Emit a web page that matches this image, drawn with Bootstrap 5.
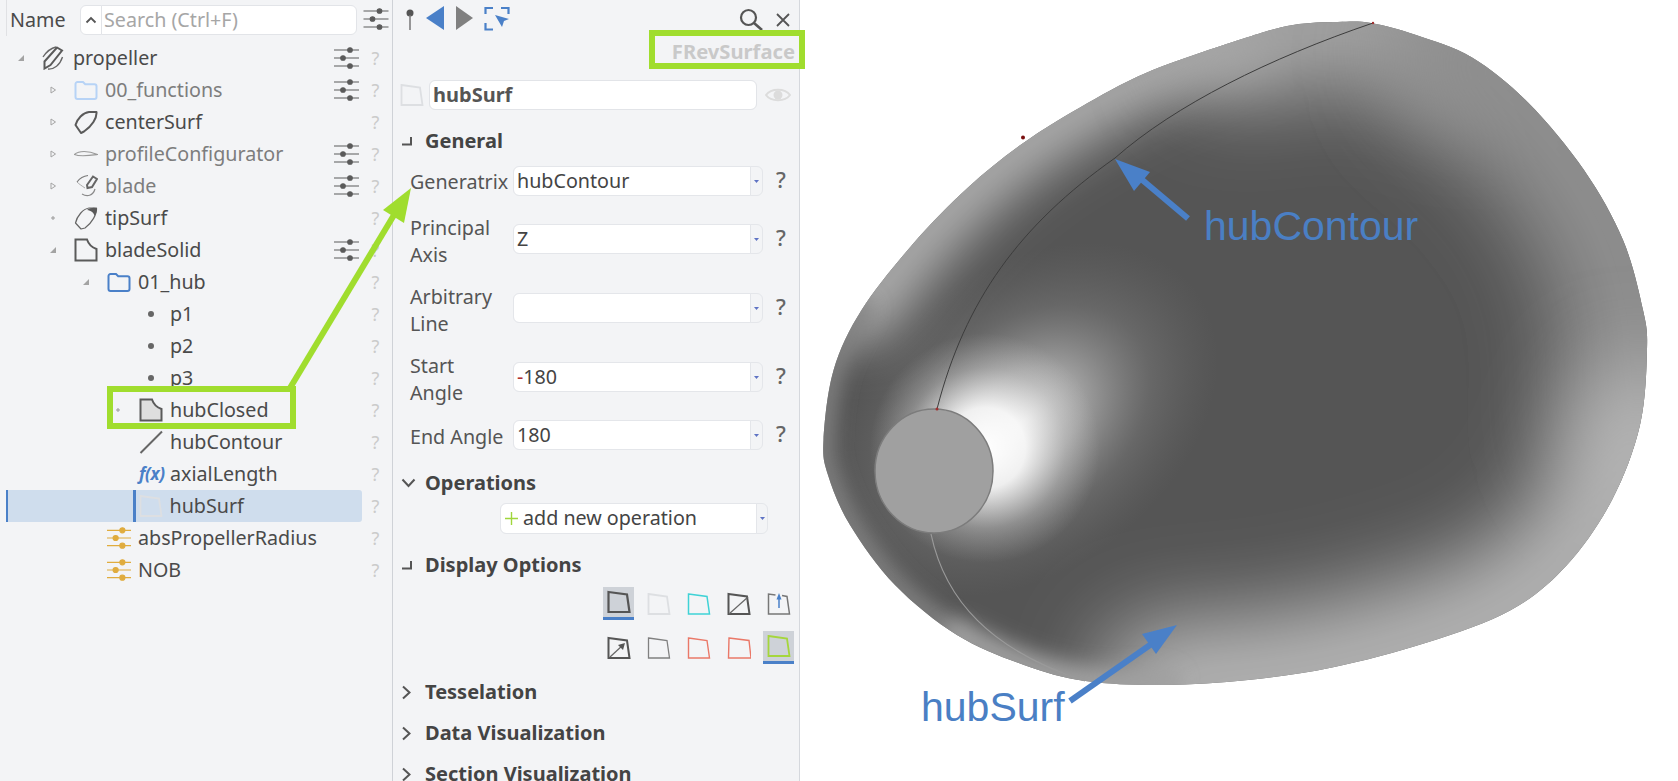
<!DOCTYPE html>
<html lang="en">
<head>
  <meta charset="UTF-8" />
  <title>hubSurf - FRevSurface</title>
  <link href="https://cdn.jsdelivr.net/npm/bootstrap@5.3.0/dist/css/bootstrap.min.css" rel="stylesheet" />
  <style>
    html, body { height: 781px; overflow: hidden; }
    body { font-family: "Noto Sans", "Open Sans", sans-serif; font-size: 19.7px; color: #4a4a4a; background: #fff; position: relative; }
    .tree-panel { width: 393px; background: #f3f4f6; border-right: 1.5px solid #cfd2d7; flex: none; }
    .props-panel { width: 407px; background: #f3f4f6; border-right: 1.5px solid #d5d8dd; flex: none; }
    .view-panel { flex: 1 1 auto; }
    .view-panel svg { display: block; }

    /* tree */
    .tree-head { height: 42px; padding-left: 6px; }
    .tree-head .name { border-left: 1px solid #e0e1e4; height: 36px; width: 74px; padding-left: 3px; line-height: 40px; }
    .search { width: 277px; height: 30px; margin-top: 5px; }
    .search .input-group-text { width: 22px; padding: 0; justify-content: center; background: #fff; border-color: #e2e4e8; }
    .search .form-control { padding: 0 2px; font-size: 19.7px; color: #a6a6a6; background: #fff; border-color: #e2e4e8; line-height: 28px; min-height: 0; }
    .head-tune { width: 26px; height: 22px; margin: 8px 0 0 6px; }
    .tree-row { height: 32px; margin-left: 6px; }
    .tree-main { width: 356px; height: 32px; flex: none; position: relative; padding-right: 3px; }
    .lvl-0 { padding-left: 8px; }
    .lvl-1 { padding-left: 40px; }
    .lvl-2 { padding-left: 73px; }
    .lvl-3 { padding-left: 105px; }
    .twist { width: 14px; margin-right: 14px; height: 32px; flex: none; display: flex; align-items: center; justify-content: center; }
    .ic { width: 24px; height: 24px; flex: none; margin-right: 7px; }
    .tree-row .lbl { flex: 1 1 auto; white-space: nowrap; }
    .muted-row { color: #7d7d7d; }
    .tune { width: 25px; height: 22px; flex: none; }
    .tree-help { width: 27px; text-align: center; color: #cbcbcb; font-size: 18px; }
    .tree-main.selected { background: #cfdded; border-radius: 0 3px 3px 0; border-left: 2.5px solid #4a80c8; padding-left: 102.5px; }
    .tree-main.selected::after { content: ""; position: absolute; left: 125px; top: 0; bottom: 0; width: 2.5px; background: #4a80c8; }
    .fx { color: #4a80c8; font-weight: 700; font-style: italic; font-size: 17px; width: 31px; flex: none; letter-spacing: -.3px; }

    /* properties */
    .tools { height: 36px; padding: 6px 5px 0 10px; }
    .ml-tri1 { margin-left: 8px; }
    .ml-tri2 { margin-left: 10px; }
    .ml-target { margin-left: 11px; }
    .type-name { height: 26px; line-height: 26px; margin-top: 2px; padding-right: 4px; color: #c9c9c9; font-weight: 700; font-size: 20.2px; }
    .name-row { margin-top: 16px; padding-left: 7px; height: 30px; }
    .name-box { width: 328px; height: 30px; margin-left: 5px; padding: 0 3px; font-size: 20px; font-weight: 700; color: #555; border-color: #e2e4e8; line-height: 28px; }
    .sect { height: 28px; padding-left: 8px; font-weight: 700; color: #444; font-size: 20px; }
    .sect .chev { width: 24px; flex: none; display: flex; }
    .form-line { margin-top: 15px; padding-left: 17px; }
    .form-line.first { margin-top: 8px; }
    .form-line.last { margin-top: 11px; }
    .form-line label { width: 103px; flex: none; line-height: 27px; color: #555; }
    .form-line.last label { margin-top: 2px; }
    .combo { width: 250px; height: 30px; flex: none; }
    .form-line.tall .combo { margin-bottom: 4px; }
    .combo .form-control { height: 30px; min-height: 0; padding: 0 3px; font-size: 19.7px; color: #444; line-height: 28px; border-color: #e4e6ea; white-space: nowrap; }
    .combo .input-group-text { width: 13px; padding: 0; justify-content: center; background: #f3f4f6; border-color: #e4e6ea; }
    .combo-help { width: 38px; text-align: center; color: #666; font-size: 22px; font-weight: 500; margin-bottom: 3px; }
    .form-line.tall .combo-help { margin-bottom: 7px; }
    .minus { color: #b03030; }
    .add-op { width: 268px; margin-left: 107px; height: 31px; margin-top: 6px; }
    .add-op .form-control { height: 31px; padding-left: 22px; position: relative; }
    .add-op svg.plus { position: absolute; left: 4px; top: 8px; }
    .add-op .input-group-text { width: 12px; }
    .disp-grid { display: grid; grid-template-columns: repeat(5, 31px); column-gap: 9px; row-gap: 11px; padding-left: 210px; margin-top: 8px; }
    .disp { height: 33px; display: flex; align-items: center; justify-content: center; }
    .disp.on { background: #ced2d8; border-bottom: 3px solid #4a80c8; }
    .disp svg { width: 24px; height: 24px; }
    .mt-13 { margin-top: 13px; }
    .mt-14 { margin-top: 14px; }
    .mt-16 { margin-top: 16px; }
    .mt-17 { margin-top: 17px; }

    .overlay { position: absolute; left: 0; top: 0; pointer-events: none; }
  </style>
</head>
<body class="d-flex">

  <svg width="0" height="0" class="position-absolute">
    <defs>
      <symbol id="tune" viewBox="0 0 25 22"><g stroke="#5a5a5a" stroke-width="1.100" fill="#5a5a5a"><path d="M0 3h25M0 11h25M0 19h25" fill="none"/><circle cx="16" cy="3" r="2.300"/><circle cx="9" cy="11" r="2.300"/><circle cx="16" cy="19" r="2.300"/></g></symbol>
      <symbol id="tune-y" viewBox="0 0 25 22"><g stroke="#e0ac3e" stroke-width="1.300" fill="#e0ac3e"><path d="M0 3h25M0 11h25M0 19h25" fill="none"/><circle cx="16" cy="3" r="2.600"/><circle cx="9" cy="11" r="2.600"/><circle cx="16" cy="19" r="2.600"/></g></symbol>
      <symbol id="tw-open" viewBox="0 0 8 8"><path d="M7 1v6H1z" fill="#a3a3a3"/></symbol>
      <symbol id="tw-closed" viewBox="0 0 8 8"><path d="M2 1l4.500 3L2 7z" fill="none" stroke="#a3a3a3"/></symbol>
      <symbol id="tw-plus" viewBox="0 0 8 8"><path d="M4 2v4M2 4h4" stroke="#999" stroke-width="1"/></symbol>
      <symbol id="folder" viewBox="0 0 24 24"><path d="M1.500 6a2 2 0 0 1 2-2h5.500l2.200 2.300h9.300a2 2 0 0 1 2 2V19a2 2 0 0 1-2 2h-17a2 2 0 0 1-2-2z" fill="none" stroke="currentColor" stroke-width="2"/></symbol>
      <symbol id="sheet" viewBox="0 0 24 24"><path d="M1.500 1.500H13C14.500 6 18 9.500 22.500 11V22.500H1.500z" fill="none" stroke="#5a5a5a" stroke-width="2"/></symbol>
      <symbol id="sheet-fill" viewBox="0 0 24 24"><path d="M1.500 1.500H13C14.500 6 18 9.500 22.500 11V22.500H1.500z" fill="#dedede" stroke="#5a5a5a" stroke-width="2"/></symbol>
      <symbol id="quad-pale" viewBox="0 0 24 24"><path d="M1.500 2L20 4.500L22.500 22H1.500z" fill="none" stroke="#dddfe2" stroke-width="1.800"/></symbol>
      <symbol id="center" viewBox="0 0 24 24"><path d="M1.500 15C3 9 9 2.500 15 2h7.500C23 8 18 16 10 21.500L7 23z" fill="none" stroke="#5a5a5a" stroke-width="2" stroke-linejoin="round"/></symbol>
      <symbol id="tip" viewBox="0 0 24 24"><path d="M1.500 17C3 10 9 3 15 2h7.500C23 8 18 17 11 22L7 23z" fill="none" stroke="#666" stroke-width="1.200" stroke-linejoin="round"/><path d="M13 4C16 1.500 21 1 23 2.500C23 5 22 8 20.500 10C20 6.500 17 4.500 13 4z" fill="#5a5a5a"/></symbol>
      <symbol id="airfoil" viewBox="0 0 24 24"><path d="M.5 12.500C5 8.500 14 8.500 23.500 12.500C14 13.800 6 15 .5 12.500z" fill="none" stroke="#999" stroke-width="1.200"/></symbol>
      <symbol id="blade" viewBox="0 0 24 24"><path d="M3 8C6 4 10 2 14 1.500" fill="none" stroke="#7a7a7a" stroke-width="1.200"/><path d="M3 8C5 10 8 12 11 14" fill="none" stroke="#999" stroke-width=".8"/><path d="M13 11L19 2.500L23 5L18 13L13.500 14z" fill="none" stroke="#666" stroke-width="2"/><path d="M8 20C13 23 19 22 21 15" fill="none" stroke="#8a8a8a" stroke-width="1.200"/></symbol>
      <symbol id="prop" viewBox="0 0 24 24"><path d="M1 11C5 5 9 2 14 1" fill="none" stroke="#666" stroke-width="1.300"/><path d="M15 1.500L20 4.500L8.500 19L2.500 22.500L2.500 15.500z" fill="none" stroke="#5a5a5a" stroke-width="2"/><path d="M6 23C12 23.500 18 19 20.500 11" fill="none" stroke="#666" stroke-width="1.300"/></symbol>
      <symbol id="caret" viewBox="0 0 7 5"><path d="M1 1h5L3.500 4z" fill="#5f73c4"/></symbol>
    </defs>
  </svg>

  <!-- object tree -->
  <div class="tree-panel">
    <div class="tree-head d-flex">
      <div class="name">Name</div>
      <div class="input-group flex-nowrap search">
        <span class="input-group-text"><svg width="12" height="8" viewBox="0 0 12 8"><path d="M1.500 6.500L6 2l4.500 4.500" fill="none" stroke="#555" stroke-width="1.800"/></svg></span>
        <div class="form-control">Search (Ctrl+F)</div>
      </div>
      <svg class="head-tune"><use href="#tune"/></svg>
    </div>

    <div id="tree"></div>
  </div>

  <!-- properties -->
  <div class="props-panel">
    <div class="tools d-flex align-items-start">
      <svg width="14" height="24" viewBox="0 0 14 24"><circle cx="7" cy="7" r="3.500" fill="#555"/><path d="M7 9v15" stroke="#777" stroke-width="1.500"/></svg>
      <svg width="20" height="24" viewBox="0 0 20 24" class="ml-tri1"><path d="M19 0v24L1 12z" fill="#4a80c8"/></svg>
      <svg width="18" height="24" viewBox="0 0 18 24" class="ml-tri2"><path d="M1 0v24l17-12z" fill="#808080"/></svg>
      <svg width="26" height="25" viewBox="0 0 26 25" class="ml-target"><path d="M1.500 8V2H9M17 2h7.500V8M1.500 17v6.500H9" fill="none" stroke="#4a80c8" stroke-width="2.200"/><path d="M11 9l14 4-5 2-2 6z" fill="#4a80c8"/></svg>
      <svg width="25" height="23" viewBox="0 0 25 23" class="ms-auto me-2" style="margin-top:2px"><circle cx="9.500" cy="9.500" r="7.500" fill="none" stroke="#555" stroke-width="2.200"/><path d="M15 15l8 7" stroke="#555" stroke-width="2.600"/></svg>
      <svg width="14" height="14" viewBox="0 0 14 14" class="ms-1 me-1" style="margin-top:7px"><path d="M1 1l12 12M13 1L1 13" stroke="#555" stroke-width="1.800"/></svg>
    </div>
    <div class="type-name text-end">FRevSurface</div>

    <div class="name-row d-flex align-items-center">
      <svg width="24" height="24"><use href="#quad-pale"/></svg>
      <div class="form-control name-box">hubSurf</div>
      <svg width="26" height="16" viewBox="0 0 26 16" class="ms-2"><path d="M1 8C6 1 20 1 25 8C20 15 6 15 1 8z" fill="none" stroke="#dcdcdc" stroke-width="2"/><circle cx="13" cy="8" r="4.500" fill="#dcdcdc"/></svg>
    </div>

    <div class="sect d-flex align-items-center mt-17">
      <span class="chev"><svg width="12" height="10" viewBox="0 0 12 10"><path d="M1 8.500h9V1" fill="none" stroke="#555" stroke-width="2"/></svg></span>General
    </div>

    <div class="form-line first d-flex align-items-center">
      <label>Generatrix</label>
      <div class="input-group flex-nowrap combo"><div class="form-control">hubContour</div><span class="input-group-text"><svg width="7" height="5"><use href="#caret"/></svg></span></div>
      <span class="combo-help">?</span>
    </div>
    <div class="form-line tall d-flex align-items-center">
      <label>Principal<br>Axis</label>
      <div class="input-group flex-nowrap combo"><div class="form-control">Z</div><span class="input-group-text"><svg width="7" height="5"><use href="#caret"/></svg></span></div>
      <span class="combo-help">?</span>
    </div>
    <div class="form-line tall d-flex align-items-center">
      <label>Arbitrary<br>Line</label>
      <div class="input-group flex-nowrap combo"><div class="form-control"></div><span class="input-group-text"><svg width="7" height="5"><use href="#caret"/></svg></span></div>
      <span class="combo-help">?</span>
    </div>
    <div class="form-line tall d-flex align-items-center">
      <label>Start<br>Angle</label>
      <div class="input-group flex-nowrap combo"><div class="form-control"><span class="minus">-</span>180</div><span class="input-group-text"><svg width="7" height="5"><use href="#caret"/></svg></span></div>
      <span class="combo-help">?</span>
    </div>
    <div class="form-line last d-flex align-items-center">
      <label>End Angle</label>
      <div class="input-group flex-nowrap combo"><div class="form-control">180</div><span class="input-group-text"><svg width="7" height="5"><use href="#caret"/></svg></span></div>
      <span class="combo-help">?</span>
    </div>

    <div class="sect d-flex align-items-center mt-16">
      <span class="chev"><svg width="15" height="10" viewBox="0 0 15 10"><path d="M1.500 1.500L7.500 8l6-6.500" fill="none" stroke="#555" stroke-width="2"/></svg></span>Operations
    </div>
    <div class="input-group flex-nowrap combo add-op">
      <div class="form-control"><svg class="plus" width="13" height="13" viewBox="0 0 13 13"><path d="M6.500 0v13M0 6.500h13" stroke="#a0d63c" stroke-width="1.400"/></svg>add new operation</div>
      <span class="input-group-text"><svg width="7" height="5"><use href="#caret"/></svg></span>
    </div>

    <div class="sect d-flex align-items-center mt-17">
      <span class="chev"><svg width="12" height="10" viewBox="0 0 12 10"><path d="M1 8.500h9V1" fill="none" stroke="#555" stroke-width="2"/></svg></span>Display Options
    </div>
    <div class="disp-grid">
      <div class="disp on"><svg viewBox="0 0 24 24"><path d="M1.500 2L20 4.500L22.500 22H1.500z" fill="#ced2d8" stroke="#555" stroke-width="2.200"/></svg></div>
      <div class="disp"><svg viewBox="0 0 24 24"><use href="#quad-pale"/></svg></div>
      <div class="disp"><svg viewBox="0 0 24 24"><path d="M1.500 2L20 4.500L22.500 22H1.500z" fill="none" stroke="#3fd2d6" stroke-width="1.500"/></svg></div>
      <div class="disp"><svg viewBox="0 0 24 24"><path d="M1.500 2L20 4.500L22.500 22H1.500z" fill="none" stroke="#555" stroke-width="2"/><path d="M2 22L21 5" stroke="#666" stroke-width="1.200"/></svg></div>
      <div class="disp"><svg viewBox="0 0 24 24"><path d="M1.500 9V2L8.500 3M15 3.500L20 4.500L22.500 22H1.500V9" fill="none" stroke="#777" stroke-width="1.500"/><path d="M12 16V5" stroke="#4a80c8" stroke-width="1.500"/><path d="M12 1l2.500 6.500h-5z" fill="#4a80c8"/></svg></div>
      <div class="disp"><svg viewBox="0 0 24 24"><path d="M1.500 2L20 4.500L22.500 22H1.500z" fill="none" stroke="#555" stroke-width="2"/><path d="M3 21L16 9" stroke="#666" stroke-width="1.200"/><path d="M18 7l-2 7-5-5z" fill="#555"/></svg></div>
      <div class="disp"><svg viewBox="0 0 24 24"><path d="M1.500 2L20 4.500L22.500 22H1.500z" fill="none" stroke="#808080" stroke-width="1.300"/></svg></div>
      <div class="disp"><svg viewBox="0 0 24 24"><path d="M1.500 2L20 4.500L22.500 22H1.500z" fill="none" stroke="#ea7868" stroke-width="1.400"/></svg></div>
      <div class="disp"><svg viewBox="0 0 24 24"><path d="M2 2L22 4.500L24 22H1.500z" fill="none" stroke="#ea7868" stroke-width="1.400"/></svg></div>
      <div class="disp on"><svg viewBox="0 0 24 24"><path d="M1.500 2L20 4.500L22.500 22H1.500z" fill="#ced2d8" stroke="#a5d63c" stroke-width="1.800"/></svg></div>
    </div>

    <div class="sect d-flex align-items-center mt-14">
      <span class="chev"><svg width="11" height="15" viewBox="0 0 11 15"><path d="M2 1.500L8.500 7.500L2 13.500" fill="none" stroke="#555" stroke-width="2"/></svg></span>Tesselation
    </div>
    <div class="sect d-flex align-items-center mt-13">
      <span class="chev"><svg width="11" height="15" viewBox="0 0 11 15"><path d="M2 1.500L8.500 7.500L2 13.500" fill="none" stroke="#555" stroke-width="2"/></svg></span>Data Visualization
    </div>
    <div class="sect d-flex align-items-center mt-13">
      <span class="chev"><svg width="11" height="15" viewBox="0 0 11 15"><path d="M2 1.500L8.500 7.500L2 13.500" fill="none" stroke="#555" stroke-width="2"/></svg></span>Section Visualization
    </div>
  </div>

  <!-- 3D view: surface rendering drawn on its own canvas -->
  <div class="view-panel">
    <svg width="878" height="781" viewBox="0 0 878 781">
      <defs>
        <clipPath id="hull"><path id="hullPath"/></clipPath>
        <filter id="b50" filterUnits="userSpaceOnUse" x="-200" y="-200" width="1300" height="1200"><feGaussianBlur stdDeviation="42"/></filter>
        <filter id="b30" filterUnits="userSpaceOnUse" x="-200" y="-200" width="1300" height="1200"><feGaussianBlur stdDeviation="26"/></filter>
        <filter id="b10" filterUnits="userSpaceOnUse" x="-200" y="-200" width="1300" height="1200"><feGaussianBlur stdDeviation="10"/></filter>
        <radialGradient id="spot" cx="50%" cy="50%" r="50%">
          <stop offset="0" stop-color="#fff" stop-opacity=".75"/>
          <stop offset=".3" stop-color="#e8e8e8" stop-opacity=".5"/>
          <stop offset=".65" stop-color="#b0b0b0" stop-opacity=".2"/>
          <stop offset="1" stop-color="#888" stop-opacity="0"/>
        </radialGradient>
        <radialGradient id="core" cx="50%" cy="50%" r="50%">
          <stop offset="0" stop-color="#fff"/>
          <stop offset=".35" stop-color="#fff" stop-opacity=".85"/>
          <stop offset=".7" stop-color="#ddd" stop-opacity=".3"/>
          <stop offset="1" stop-color="#ccc" stop-opacity="0"/>
        </radialGradient>
      </defs>
      <g clip-path="url(#hull)">
        <rect width="878" height="781" fill="#555"/>
        <!-- soft light along the rim, one stroke per side of the hull -->
        <path class="rim" data-pts="62,310 112,245 168,187 224,142 280,107 347,72 442,39" fill="none" stroke="#b0b0b0" stroke-width="70" stroke-linecap="round" filter="url(#b30)"/>
        <path class="rim" data-pts="442,39 493,25 537,22 616,35 672,57" fill="none" stroke="#a6a6a6" stroke-width="130" stroke-linecap="round" filter="url(#b50)"/>
        <path class="rim" data-pts="672,57 728,102 784,170 823,240 847,350 840,425" fill="none" stroke="#8e8e8e" stroke-width="170" stroke-linecap="round" filter="url(#b50)"/>
        <path class="rim" data-pts="840,425 812,500 767,565 711,610 627,642 532,667 448,680 364,685" fill="none" stroke="#b6b6b6" stroke-width="130" stroke-linecap="round" filter="url(#b50)"/>
        <path class="rim" data-pts="62,310 33,370 23,440 28,475 50,525 95,585 157,635" fill="none" stroke="#848484" stroke-width="20" stroke-linecap="round" filter="url(#b10)"/>
        <path class="rim" data-pts="157,635 224,665 285,681 364,685" fill="none" stroke="#a0a0a0" stroke-width="30" stroke-linecap="round" filter="url(#b10)"/>
        <!-- highlight next to the disc -->
        <ellipse cx="225" cy="420" rx="215" ry="150" fill="url(#spot)" transform="rotate(-38 225 420)"/>
        <ellipse cx="185" cy="448" rx="115" ry="115" fill="url(#core)"/>
      </g>
      <!-- generatrix traces -->
      <path d="M137 409C165 300 220 225 315 158C375 105 470 58 573 23" fill="none" stroke="#3c3c3c" stroke-width="1"/>
      <path d="M131 534C145 600 190 650 285 681" fill="none" stroke="#9a9a9a" stroke-width="1.200"/>
      <ellipse cx="134" cy="471" rx="59" ry="62" fill="#a0a0a0" stroke="#7c7c7c" stroke-width="1.500"/>
      <circle cx="137" cy="409" r="1.500" fill="#a03030"/>
      <circle cx="573" cy="23" r="1.200" fill="#a03030"/>
      <circle cx="223" cy="137.500" r="2" fill="#7a1010"/>

      <!-- callouts -->
      <g fill="#4a80c8" stroke="none">
        <path d="M388 218.500L340 178" stroke="#4a80c8" stroke-width="6"/>
        <path d="M315 159L350 172L334 191z"/>
        <path d="M270 701L360 638" stroke="#4a80c8" stroke-width="6"/>
        <path d="M377 625L342 634L356 654z"/>
      </g>
      <text x="404" y="240" font-family="Liberation Sans, sans-serif" font-size="41" fill="#4a7fc4">hubContour</text>
      <text x="121" y="721" font-family="Liberation Sans, sans-serif" font-size="41" fill="#4a7fc4">hubSurf</text>
    </svg>
  </div>

  <!-- green annotations across panels -->
  <svg class="overlay" width="806" height="440" viewBox="0 0 806 440">
    <g fill="none" stroke="#a0dd2e" stroke-width="6">
      <rect x="110" y="389" width="183" height="37"/>
      <path d="M290 388L394 215"/>
      <rect x="652" y="33" width="150" height="33"/>
    </g>
    <path d="M411 188L383 210L404 223z" fill="#a0dd2e"/>
  </svg>

  <script src="https://cdn.jsdelivr.net/npm/bootstrap@5.3.0/dist/js/bootstrap.bundle.min.js"></script>
  <script>
    // tree content: label, level, twistie, icon, has tune button, greyed out, selected
    const rows = [
      ["propeller", 0, "open", "prop", true, false],
      ["00_functions", 1, "closed", "folder-pale", true, true],
      ["centerSurf", 1, "closed", "center", false, false],
      ["profileConfigurator", 1, "closed", "airfoil", true, true],
      ["blade", 1, "closed", "blade", true, true],
      ["tipSurf", 1, "plus", "tip", false, false],
      ["bladeSolid", 1, "open", "sheet", true, false],
      ["01_hub", 2, "open", "folder", false, false],
      ["p1", 3, "", "dot", false, false],
      ["p2", 3, "", "dot", false, false],
      ["p3", 3, "", "dot", false, false],
      ["hubClosed", 3, "plus", "sheet-fill", false, false],
      ["hubContour", 3, "", "line", false, false],
      ["axialLength", 3, "", "fx", false, false],
      ["hubSurf", 3, "", "quad-pale", false, false, true],
      ["absPropellerRadius", 2, "", "tune-y", false, false],
      ["NOB", 2, "", "tune-y", false, false],
    ];

    function iconHtml(name) {
      if (name === "fx") return '<span class="fx">f(x)</span>';
      if (name === "dot") return '<svg class="ic" viewBox="0 0 24 24"><circle cx="12" cy="12" r="3" fill="#666"/></svg>';
      if (name === "line") return '<svg class="ic" viewBox="0 0 24 24"><path d="M1.500 23L23 1.500" stroke="#666" stroke-width="2"/></svg>';
      if (name === "folder") return '<svg class="ic" style="color:#4a80c8"><use href="#folder"/></svg>';
      if (name === "folder-pale") return '<svg class="ic" style="color:#b7d3f6"><use href="#folder"/></svg>';
      return `<svg class="ic"><use href="#${name}"/></svg>`;
    }

    document.getElementById("tree").innerHTML = rows.map(r => {
      const [label, lvl, tw, icon, tune, muted, sel] = r;
      return `<div class="tree-row d-flex align-items-center">
        <div class="tree-main d-flex align-items-center lvl-${lvl} ${sel ? "selected" : ""} ${muted ? "muted-row" : ""}">
          <span class="twist">${tw ? `<svg width="8" height="8"><use href="#tw-${tw}"/></svg>` : ""}</span>
          ${iconHtml(icon)}<span class="lbl">${label}</span>
          ${tune ? '<svg class="tune"><use href="#tune"/></svg>' : ""}
        </div>
        <span class="tree-help">?</span>
      </div>`;
    }).join("");

    // smooth curve through the traced outline points (Catmull-Rom to cubic)
    function smooth(pts, closed) {
      const n = pts.length;
      const at = i => closed ? pts[(i + n) % n] : pts[Math.max(0, Math.min(n - 1, i))];
      let d = `M${pts[0][0]} ${pts[0][1]}`;
      for (let i = 0; i < (closed ? n : n - 1); i++) {
        const [p0, p1, p2, p3] = [at(i - 1), at(i), at(i + 1), at(i + 2)];
        const c1 = [p1[0] + (p2[0] - p0[0]) / 6, p1[1] + (p2[1] - p0[1]) / 6];
        const c2 = [p2[0] - (p3[0] - p1[0]) / 6, p2[1] - (p3[1] - p1[1]) / 6];
        d += `C${c1[0].toFixed(1)} ${c1[1].toFixed(1)} ${c2[0].toFixed(1)} ${c2[1].toFixed(1)} ${p2[0]} ${p2[1]}`;
      }
      return d + (closed ? "Z" : "");
    }

    const hull = [[23.5,440],[33.6,370],[61.6,310],[112,245],[168,187.5],[224,142.5],[280,107.5],[347,72.5],[442,39],[493,25],[537.5,22],[571,23],[616,35],[672,57.5],[728,102.5],[784,170],[823,240],[843,310],[847,350],[840,425],[812,500],[767,565],[711,610],[627,642.5],[532,667.5],[448,680],[364,685],[285.5,681],[224,665],[157,635],[95,585],[50,525],[28,475]];
    document.getElementById("hullPath").setAttribute("d", smooth(hull, true));
    document.querySelectorAll(".rim").forEach(el => {
      const pts = el.dataset.pts.split(" ").map(p => p.split(",").map(Number));
      el.setAttribute("d", smooth(pts, false));
    });
  </script>
</body>
</html>
